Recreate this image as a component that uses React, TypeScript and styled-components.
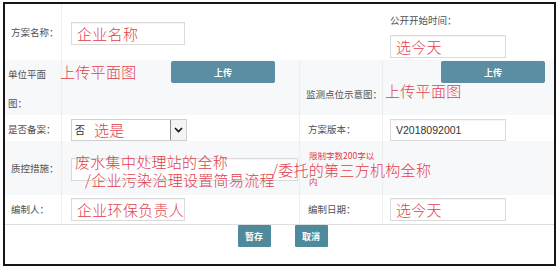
import React from "react";
import styled, { createGlobalStyle } from "styled-components";

const Global = createGlobalStyle`
  html, body { margin: 0; padding: 0; background: #fff; }
  body { font-family: "Noto Sans CJK SC", "Noto Sans", sans-serif; }
  #root { width: 560px; height: 269px; overflow: hidden; }
`;

const Frame = styled.div`
  margin: 2px 0 0 3px;
  width: 553px;
  height: 264px;
  box-sizing: border-box;
  border: 2px solid #161616;
  display: flex;
  flex-direction: column;
  background: #fff;
`;

const Row = styled.div<{ $h: number; $grey?: boolean }>`
  position: relative;
  display: grid;
  grid-template-columns: 57px 238px 83px 1fr;
  height: ${(p) => p.$h}px;
  background: ${(p) => (p.$grey ? "#f6f8fa" : "#fff")};
`;

const Cell = styled.div<{ $line?: boolean }>`
  display: flex;
  align-items: center;
  box-sizing: border-box;
  min-width: 0;
  border-right: ${(p) => (p.$line ? "1px solid #eceef0" : "none")};
`;

const LabelCell = styled(Cell)<{ $pl?: number }>`
  padding-left: ${(p) => p.$pl ?? 6}px;
  font-size: 9.5px;
  line-height: 29px;
  color: #505050;
  white-space: nowrap;
`;

const ValueCell = styled(Cell)<{ $pl?: number }>`
  padding-left: ${(p) => p.$pl ?? 9}px;
`;

const UploadCell = styled(Cell)<{ $pr: number }>`
  align-items: flex-start;
  justify-content: flex-end;
  padding-top: 1px;
  padding-right: ${(p) => p.$pr}px;
`;

const StackCell = styled(Cell)`
  flex-direction: column;
  align-items: flex-start;
  justify-content: flex-end;
  padding: 0 0 2px 7px;
`;

const TopLabel = styled.div`
  font-size: 9.5px;
  line-height: 12px;
  color: #505050;
`;

const Box = styled.div<{ $w: number; $h?: number; $mt?: number }>`
  box-sizing: border-box;
  width: ${(p) => p.$w}px;
  height: ${(p) => p.$h ?? 23}px;
  margin-top: ${(p) => p.$mt ?? 0}px;
  border: 1px solid #dadada;
  background: #fff;
  box-shadow: inset 0 1px 1px rgba(0, 0, 0, 0.04);
  display: flex;
  align-items: center;
  padding-left: 5px;
  overflow: visible;
  white-space: nowrap;
`;

const RedText = styled.span`
  font-family: "Noto Sans CJK SC", sans-serif;
  font-weight: 300;
  font-size: 15px;
  line-height: 18px;
  color: #e2404d;
  letter-spacing: 0.3px;
`;

const PlainText = styled.span`
  font-family: "Liberation Sans", "Noto Sans CJK SC", sans-serif;
  font-size: 10.5px;
  color: #333;
`;

const SelectBox = styled.div`
  box-sizing: border-box;
  width: 116px;
  height: 22px;
  border: 1px solid #cfcfcf;
  background: #fff;
  display: flex;
  align-items: stretch;
`;

const SelectValue = styled.div`
  flex: 1;
  display: flex;
  align-items: center;
  gap: 9px;
  padding-left: 3px;
  font-size: 10px;
  color: #333;
  white-space: nowrap;
`;

const Chevron = styled.div`
  width: 15px;
  border-left: 1px solid #8a8a8a;
  background: #f4f4f4;
  display: flex;
  align-items: center;
  justify-content: center;
`;

const UploadButton = styled.button`
  width: 104px;
  height: 22px;
  border: none;
  border-radius: 2px;
  background: #5b8ea2;
  color: #fff;
  font-family: "Noto Sans CJK SC", sans-serif;
  font-size: 9px;
  font-weight: 700;
  padding: 0;
`;

const Note = styled.div`
  font-size: 8.5px;
  line-height: 26px;
  color: #e53b3b;
  white-space: normal;
  width: 68px;
  word-break: break-all;
`;

const Annotation = styled.span<{ $x: number; $y: number }>`
  position: absolute;
  left: ${(p) => p.$x}px;
  top: ${(p) => p.$y}px;
  font-family: "Noto Sans CJK SC", sans-serif;
  font-weight: 300;
  font-size: 15px;
  line-height: 18px;
  color: #e2404d;
  white-space: nowrap;
  letter-spacing: 0.3px;
  pointer-events: none;
`;

const Footer = styled.div`
  flex: 1;
  border-top: 1px solid #dedede;
  display: flex;
  justify-content: center;
  align-items: flex-start;
  gap: 24px;
  padding-left: 6px;
`;

const ActionButton = styled.button`
  width: 33px;
  height: 22px;
  border: none;
  border-radius: 1px;
  background: #4f8a9c;
  color: #fff;
  font-family: "Noto Sans CJK SC", sans-serif;
  font-size: 9px;
  font-weight: 700;
  padding: 0;
`;

export default function App() {
  return (
    <>
      <Global />
      <Frame>
        <Row $h={56}>
          <LabelCell $line>方案名称：</LabelCell>
          <ValueCell>
            <Box $w={114} $mt={3}>
              <RedText>企业名称</RedText>
            </Box>
          </ValueCell>
          <Cell />
          <StackCell>
            <TopLabel>公开开始时间：</TopLabel>
            <Box $w={116} $mt={9}>
              <RedText>选今天</RedText>
            </Box>
          </StackCell>
        </Row>

        <Row $h={55} $grey>
          <LabelCell $line $pl={3}>
            单位平面
            <br />
            图：
          </LabelCell>
          <UploadCell $pr={24} $line>
            <UploadButton>上传</UploadButton>
          </UploadCell>
          <LabelCell $pl={6} $line>
            <span style={{ marginTop: 10 }}>监测点位示意图：</span>
          </LabelCell>
          <UploadCell $pr={9}>
            <UploadButton>上传</UploadButton>
          </UploadCell>
          <Annotation $x={55} $y={3}>上传平面图</Annotation>
          <Annotation $x={380} $y={22}>上传平面图</Annotation>
        </Row>

        <Row $h={26}>
          <LabelCell $line $pl={3}>是否备案：</LabelCell>
          <ValueCell $line>
            <SelectBox>
              <SelectValue>
                <span>否</span>
                <RedText>选是</RedText>
              </SelectValue>
              <Chevron>
                <svg width="9" height="6" viewBox="0 0 9 6">
                  <polyline points="1,1 4.5,4.5 8,1" fill="none" stroke="#111" strokeWidth="1.6" />
                </svg>
              </Chevron>
            </SelectBox>
          </ValueCell>
          <LabelCell $pl={8} $line>方案版本：</LabelCell>
          <ValueCell $pl={7}>
            <Box $w={116} $h={22}>
              <PlainText>V2018092001</PlainText>
            </Box>
          </ValueCell>
        </Row>

        <Row $h={54} $grey>
          <LabelCell $line>质控措施：</LabelCell>
          <ValueCell $line>
            <Box $w={227} $h={23} $mt={2} />
          </ValueCell>
          <LabelCell $pl={9} $line>
            <Note>限制字数200字以内</Note>
          </LabelCell>
          <Cell />
          <Annotation $x={70} $y={12}>废水集中处理站的全称</Annotation>
          <Annotation $x={80} $y={30}>/企业污染治理设置简易流程</Annotation>
          <Annotation $x={267} $y={20}>/委托的第三方机构全称</Annotation>
        </Row>

        <Row $h={29}>
          <LabelCell $line>编制人：</LabelCell>
          <ValueCell $line>
            <Box $w={114}>
              <RedText>企业环保负责人</RedText>
            </Box>
          </ValueCell>
          <LabelCell $pl={8} $line>编制日期：</LabelCell>
          <ValueCell $pl={7}>
            <Box $w={116}>
              <RedText>选今天</RedText>
            </Box>
          </ValueCell>
        </Row>

        <Footer>
          <ActionButton>暂存</ActionButton>
          <ActionButton>取消</ActionButton>
        </Footer>
      </Frame>
    </>
  );
}
